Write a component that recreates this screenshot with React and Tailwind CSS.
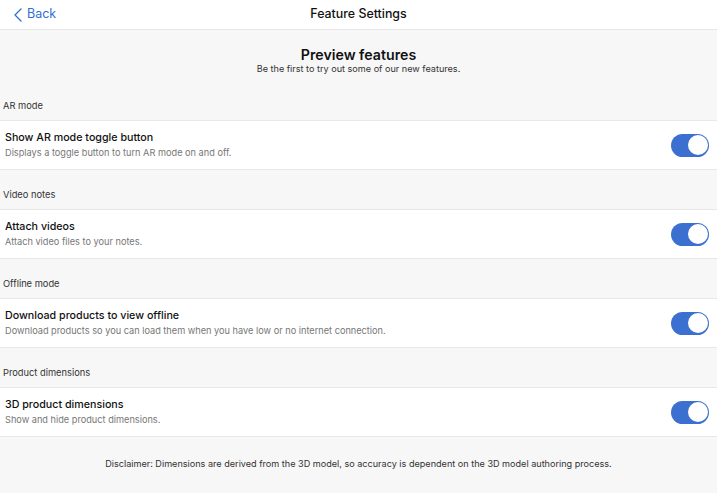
import React, { useState } from 'react';

const sections = [
  {
    label: 'AR mode',
    title: 'Show AR mode toggle button',
    desc: 'Displays a toggle button to turn AR mode on and off.',
  },
  {
    label: 'Video notes',
    title: 'Attach videos',
    desc: 'Attach video files to your notes.',
  },
  {
    label: 'Offline mode',
    title: 'Download products to view offline',
    desc: 'Download products so you can load them when you have low or no internet connection.',
  },
  {
    label: 'Product dimensions',
    title: '3D product dimensions',
    desc: 'Show and hide product dimensions.',
  },
];

function Toggle({ on, onChange }) {
  return (
    <button
      onClick={onChange}
      className={`w-[38px] h-[23px] rounded-full p-[1.5px] flex items-center ${on ? 'bg-[#3b70d1] justify-end' : 'bg-[#e5e5e5] justify-start'}`}
    >
      <span className="w-[20px] h-[20px] rounded-full bg-white block" />
    </button>
  );
}

export default function App() {
  const [values, setValues] = useState([true, true, true, true]);

  const flip = (i) => {
    setValues(values.map((v, j) => (j === i ? !v : v)));
  };

  return (
    <div className="min-h-screen bg-[#f7f7f7] text-[#111] font-['Inter','Liberation_Sans',sans-serif]">
      <div className="h-[30px] bg-white border-b border-[#e6e6e6] grid grid-cols-[1fr_auto_1fr] items-center">
        <button className="flex items-center gap-[5px] pl-[14px] text-[#2f6fd6] text-[12.5px]">
          <svg width="8" height="14" viewBox="0 0 8 14" fill="none">
            <path d="M7 1L1 7l6 6" stroke="#2f6fd6" strokeWidth="1.3" strokeLinecap="round" strokeLinejoin="round" />
          </svg>
          <span>Back</span>
        </button>
        <h1 className="text-[12.4px] font-medium">Feature Settings</h1>
        <div />
      </div>

      <div className="pt-[16px] text-center">
        <h2 className="text-[14.2px] leading-[17px] font-semibold">Preview features</h2>
        <p className="text-[9.1px] leading-[12px] text-[#333]">Be the first to try out some of our new features.</p>
      </div>

      {sections.map((s, i) => (
        <div key={s.label}>
          <div className={`${i === 0 ? 'pt-[25px]' : 'pt-[19px]'} pb-[8px] px-[3px] text-[9.3px] leading-[12px] text-[#333]`}>
            {s.label}
          </div>
          <div className="bg-white border-y border-[#e8e8e8] flex items-center justify-between pl-[5px] pr-[8px] h-[50px]">
            <div className="pt-[1px]">
              <div className="text-[10.7px] leading-[14px] font-medium">{s.title}</div>
              <div className="text-[9.2px] leading-[16px] text-[#777]">{s.desc}</div>
            </div>
            <Toggle on={values[i]} onChange={() => flip(i)} />
          </div>
        </div>
      ))}

      <p className="pt-[21px] text-center text-[9.1px] leading-[12px] text-[#333]">
        Disclaimer: Dimensions are derived from the 3D model, so accuracy is dependent on the 3D model authoring process.
      </p>
    </div>
  );
}
